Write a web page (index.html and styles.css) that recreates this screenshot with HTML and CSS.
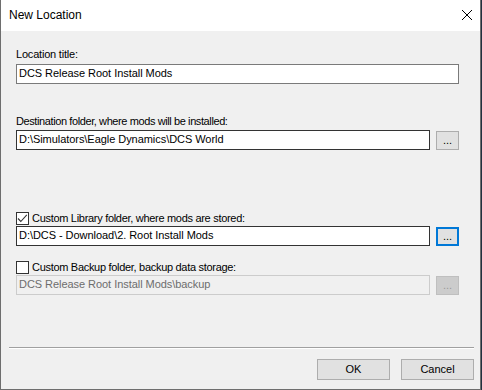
FILE: index.html
```html
<!DOCTYPE html>
<html>
<head>
<meta charset="utf-8">
<link rel="stylesheet" href="styles.css">
</head>
<body>
<div class="window">
  <div class="titlebar">
    <span class="title">New Location</span>
    <svg class="close" width="12" height="12" viewBox="0 0 12 12"><path d="M1 1 L11 11 M11 1 L1 11" stroke="#000" stroke-width="1" fill="none"/></svg>
  </div>
  <div class="content">
    <div class="label l1">Location title:</div>
    <div class="textbox tb-full">DCS Release Root Install Mods</div>
    <div class="label l2">Destination folder, where mods will be installed:</div>
    <div class="field-row r2">
      <div class="textbox tb-dark">D:\Simulators\Eagle Dynamics\DCS World</div>
      <div class="browse">...</div>
    </div>
    <div class="check-row c1">
      <span class="checkbox"><svg width="13" height="13" viewBox="0 0 13 13"><polyline points="2,6.5 4.8,9.5 10.8,2.8" stroke="#333" stroke-width="1.1" fill="none"/></svg></span>
      <span class="check-text">Custom Library folder, where mods are stored:</span>
    </div>
    <div class="field-row r3">
      <div class="textbox tb-dark">D:\DCS - Download\2. Root Install Mods</div>
      <div class="browse focused">...</div>
    </div>
    <div class="check-row c2">
      <span class="checkbox"></span>
      <span class="check-text">Custom Backup folder, backup data storage:</span>
    </div>
    <div class="field-row r4">
      <div class="textbox disabled">DCS Release Root Install Mods\backup</div>
      <div class="browse disabled">...</div>
    </div>
    <div class="separator"></div>
    <div class="actions">
      <div class="btn">OK</div>
      <div class="btn">Cancel</div>
    </div>
  </div>
</div>
</body>
</html>
```
FILE: styles.css
```css
html, body {
  margin: 0;
  padding: 0;
}
body {
  width: 482px;
  height: 390px;
  background: #22303f;
  font-family: "Liberation Sans", Arial, sans-serif;
  font-size: 11px;
  color: #000;
  overflow: hidden;
}
.window {
  width: 481px;
  height: 390px;
  box-sizing: border-box;
  border: 1px solid #6e6e6e;
  border-top: none;
  background: #f0f0f0;
  display: flex;
  flex-direction: column;
}
.titlebar {
  height: 31px;
  background: #fff;
  display: flex;
  align-items: center;
  justify-content: space-between;
  padding: 0 7px 0 8px;
}
.title {
  font-size: 12px;
  line-height: 31px;
}
.close {
  display: block;
  margin-top: -1px;
}
.content {
  flex: 1;
  display: flex;
  flex-direction: column;
  padding-left: 15px;
}
.label {
  line-height: 13px;
  white-space: nowrap;
  letter-spacing: -0.4px;
}
.l1 { margin-top: 17px; letter-spacing: -0.2px; }
.l2 { margin-top: 31px; }
.textbox {
  box-sizing: border-box;
  height: 20px;
  line-height: 16px;
  padding: 0 2px;
  background: #fff;
  border: 1px solid #7a7a7a;
  white-space: nowrap;
  overflow: hidden;
  letter-spacing: -0.05px;
}
.tb-full {
  width: 443px;
  margin-top: 3px;
}
.tb-dark {
  border-color: #333;
}
.field-row {
  display: flex;
  align-items: flex-start;
  gap: 6px;
}
.field-row .textbox {
  width: 414px;
}
.r2 { margin-top: 2px; }
.r3 { margin-top: 1px; }
.r4 { margin-top: 1px; }
.browse {
  box-sizing: border-box;
  width: 23px;
  height: 19px;
  margin-top: 1px;
  background: #e1e1e1;
  border: 1px solid #adadad;
  text-align: center;
  line-height: 17px;
}
.browse.focused {
  border: 2px solid #0078d7;
  line-height: 15px;
}
.browse.disabled {
  background: #cccccc;
  border-color: #bfbfbf;
  color: #9a9a9a;
}
.textbox.disabled {
  background: #f0f0f0;
  border-color: #cccccc;
  color: #6d6d6d;
}
.check-row {
  display: flex;
  align-items: flex-start;
  gap: 3px;
  height: 13px;
}
.c1 { margin-top: 62px; }
.c2 { margin-top: 15px; }
.checkbox {
  box-sizing: border-box;
  width: 13px;
  height: 13px;
  border: 1px solid #333;
  background: #fff;
  position: relative;
}
.checkbox svg {
  position: absolute;
  left: -1px;
  top: -1px;
}
.check-text {
  line-height: 13px;
  white-space: nowrap;
  letter-spacing: -0.3px;
}
.separator {
  margin-top: 52px;
  margin-left: -7px;
  width: 465px;
  height: 1px;
  background: #a0a0a0;
  border-bottom: 1px solid #fff;
}
.actions {
  margin-top: 10px;
  width: 458px;
  display: flex;
  justify-content: flex-end;
  gap: 11px;
}
.btn {
  box-sizing: border-box;
  width: 73px;
  height: 21px;
  background: #e1e1e1;
  border: 1px solid #adadad;
  text-align: center;
  line-height: 19px;
}
```
